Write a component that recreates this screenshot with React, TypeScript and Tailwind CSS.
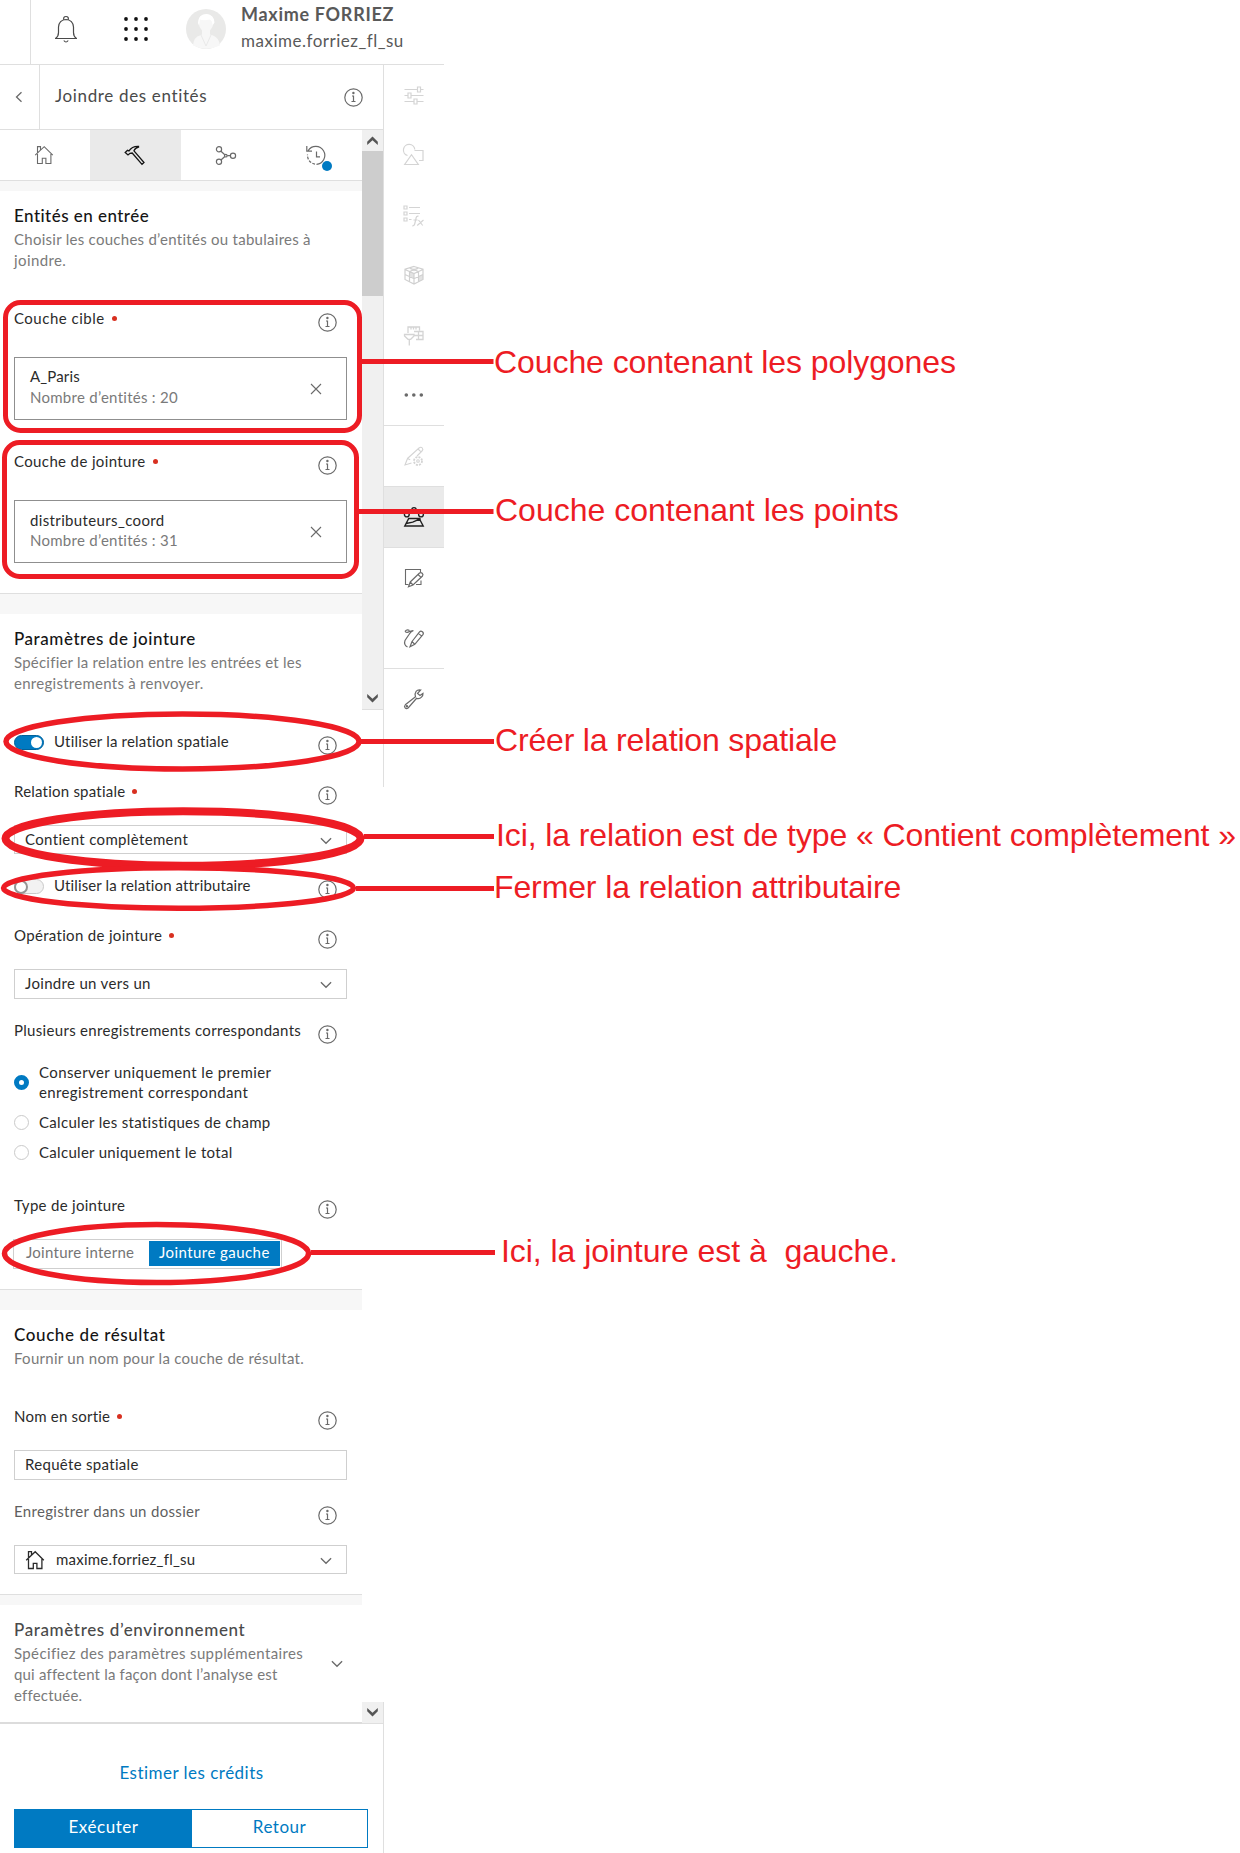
import React from "react";

type IconProps = { className?: string; children: React.ReactNode; size?: number; w?: number };

/* Stroke icon drawn on a 20 unit grid, one unit per pixel. */
function Icon({ className = "", children, size = 20, w = 1 }: IconProps) {
  return (
    <svg
      width={size}
      height={size}
      viewBox="0 0 20 20"
      fill="none"
      stroke="currentColor"
      strokeWidth={w}
      className={"block shrink-0 overflow-visible " + className}
    >
      {children}
    </svg>
  );
}

function Info({ className = "" }: { className?: string }) {
  return (
    <svg width="19" height="19" viewBox="0 0 19 19" fill="none" stroke="#6a6a6a" className={"block shrink-0 " + className}>
      <circle cx="9.5" cy="9.5" r="8.7" strokeWidth="1.2" />
      <path d="M8 8h1.5v5.5M7.500 13.500h4" strokeWidth="1.2" />
      <circle cx="9.4" cy="5" r="1.2" fill="#6a6a6a" stroke="none" />
    </svg>
  );
}

function Chevron({ className = "" }: { className?: string }) {
  return (
    <svg width="12" height="8" viewBox="0 0 12 8" fill="none" stroke="#6a6a6a" strokeWidth="1.3" className={"block shrink-0 " + className}>
      <path d="M0.9 1.2L6 6.3l5.1-5.1" />
    </svg>
  );
}

function HousePath() {
  return <path d="M3.5 9v9.5h4.8v-5.2h3.6v5.2h5V9M1.2 10.2L10.2 1.7l8.6 8.5M3.5 8.2V1.6h3v3.3" />;
}

type LabelRowProps = { text: string; tracking: string; required?: boolean; className?: string; color?: string };

function LabelRow({ text, tracking, required, className = "", color = "text-[#2b2b2b]" }: LabelRowProps) {
  return (
    <div className={"flex h-6 items-start justify-between pr-[25px] pl-[14px] " + className}>
      <div className="flex h-5 items-center">
        <span className={"text-[15px] leading-5 whitespace-nowrap " + tracking + " " + color}>{text}</span>
        {required && <span className="ml-[7px] size-[5px] rounded-full bg-[#d83020]" />}
      </div>
      <Info className="mt-[5px]" />
    </div>
  );
}

type LayerBoxProps = { name: string; nameTracking: string; count: string; pad: string };

function LayerBox({ name, nameTracking, count, pad }: LayerBoxProps) {
  return (
    <div className="mt-[25px] mr-[15px] ml-[14px] flex h-[63px] items-center justify-between border border-[#8f8f8f] pr-[24px] pl-[15px]">
      <div className={"flex h-full flex-col " + pad}>
        <span className={"text-[15px] leading-5 text-[#2b2b2b] " + nameTracking}>{name}</span>
        <span className="text-[15px] leading-5 tracking-[0.27px] text-[#7a7a7a]">{count}</span>
      </div>
      <svg width="12" height="12" viewBox="0 0 12 12" fill="none" stroke="#6a6a6a" strokeWidth="1.1">
        <path d="M1 1l10 10M11 1L1 11" />
      </svg>
    </div>
  );
}

type SelectBoxProps = { text: string; tracking: string; className: string; chevron?: boolean; home?: boolean };

function SelectBox({ text, tracking, className, chevron = true, home }: SelectBoxProps) {
  return (
    <div className={"mr-[15px] ml-[14px] flex items-center border border-[#cfcfcf] pr-[14px] pl-[10px] pb-[2px] " + className}>
      {home && (
        <Icon className="mt-[2px] mr-[11px] text-[#2b2b2b]" w={1.3} size={20}>
          <HousePath />
        </Icon>
      )}
      <span className={"grow text-[15px] leading-5 text-[#2b2b2b] " + tracking}>{text}</span>
      {chevron && <Chevron className="mt-[4px]" />}
    </div>
  );
}

function Title({ text, tracking, color = "text-[#151515]" }: { text: string; tracking: string; color?: string }) {
  return (
    <h2 className={"pl-[14px] text-[17px] leading-6 font-medium whitespace-nowrap " + tracking + " " + color}>{text}</h2>
  );
}

function Desc({ lines, className }: { lines: [string, string][]; className: string }) {
  return (
    <div className={"flex flex-col pl-[14px] text-[15px] leading-[21px] text-[#7a7a7a] " + className}>
      {lines.map(([text, tracking]) => (
        <span key={text} className={"whitespace-nowrap " + tracking}>
          {text}
        </span>
      ))}
    </div>
  );
}

function Radio({ checked, children, className }: { checked?: boolean; children: React.ReactNode; className: string }) {
  return (
    <div className={"flex items-center gap-[10px] pl-[14px] text-[15px] leading-5 text-[#2b2b2b] " + className}>
      {checked ? (
        <span className="mt-px size-[15px] shrink-0 rounded-full border-[5px] border-[#007ac2] bg-white" />
      ) : (
        <span className="mt-px size-[15px] shrink-0 rounded-full border border-[#cacaca] bg-white" />
      )}
      <div className="flex flex-col whitespace-nowrap">{children}</div>
    </div>
  );
}

function ToggleRow({ on, text, tracking, className }: { on?: boolean; text: string; tracking: string; className: string }) {
  return (
    <div className={"flex h-6 items-start pr-[25px] pl-[14px] " + className}>
      {on ? (
        <span className="mt-[4px] flex h-[15px] w-[30px] items-center justify-end rounded-full border border-[#00619b] bg-[#007ac2] px-px">
          <span className="size-[11px] rounded-full bg-white" />
        </span>
      ) : (
        <span className="mt-[4px] flex h-[15px] w-[30px] items-center rounded-full border border-[#cacaca] bg-[#f2f2f2]">
          <span className="-ml-px size-[14px] rounded-full border-2 border-[#959595] bg-white" />
        </span>
      )}
      <span className={"ml-[10px] grow text-[15px] leading-5 text-[#2b2b2b] " + tracking}>{text}</span>
      <Info className="mt-[5px]" />
    </div>
  );
}

function Arrow({ up, className = "" }: { up?: boolean; className?: string }) {
  return (
    <div className={"flex h-[21px] w-[21px] items-center justify-center bg-[#f0f0f0] " + className}>
      <svg width="11" height="9" viewBox="0 0 11 9" fill="#555">
        {up ? <path d="M5.500 0.500L0.200 5.700V9L5.500 4.300l5.300 4.700v-3.300z" /> : <path d="M5.500 8.500L0.200 3.300V0L5.500 4.700l5.300-4.700v3.300z" />}
      </svg>
    </div>
  );
}

function Tool({ children, className = "h-[60px]" }: { children: React.ReactNode; className?: string }) {
  return <div className={"flex shrink-0 items-center justify-center " + className}>{children}</div>;
}

function Toolbar() {
  return (
    <aside className="flex w-[60px] flex-col text-[#6a6a6a]">
      <Tool className="h-[60px] text-[#d4d4d4]">
        <Icon w={1.2}>
          <path d="M0.500 4.500h12.500M16.500 4.500H19.500M0.500 10.500h3M7 10.500h12.500M0.500 16.500h9M13 16.500h6.500M13.500 2h3v5h-3zM4 8h3v5H4zM10 14h3v5h-3z" />
        </Icon>
      </Tool>
      <Tool className="h-[60px] text-[#d4d4d4]">
        <Icon w={1.2}>
          <path d="M3.500 10.500A5.700 5.700 0 1 1 10.800 4.500M10.500 5.500h8.500v10H15M0.700 19.500h13.600L7.500 9.700z" />
        </Icon>
      </Tool>
      <Tool className="h-[60px] text-[#d4d4d4]">
        <Icon w={1.2}>
          <path d="M0 1h3v3H0zM5 2.500h11M0 7h3v3H0zM5 8.500h11M0 13h3v3H0zM5 14.500h2.500M8.200 21q2 0 2.500-2l1.500-6.500q.4-1.600 2.300-1.300M9.500 15h4M14.500 15l4.200 5.500M19.500 15l-6.300 5.500" />
        </Icon>
      </Tool>
      <Tool className="h-[60px] text-[#d0d0d0]">
        <Icon w={1.2}>
          <path d="M10 1.500l9 2.800v10.200l-9 4.500-9-4.500V4.300zM1 4.500l9 4 9-4M10 8.500V19M1 9.500l9 4.200 9-4.200M5.500 6.500v10.300M14.500 6.500v10.300M5.500 3l9 3.500M14.500 3l-9 3.500" />
          <path d="M5.500 6.500l4.500 2v5l-4.500-2zM14.500 11.500l4.500-2v5l-4.500 2.200zM10 3.300l4 1.500-4 1.500-4-1.500z" fill="currentColor" stroke="none" opacity=".6" />
        </Icon>
      </Tool>
      <Tool className="h-[60px] text-[#d4d4d4]">
        <Icon w={1.3}>
          <path d="M4 8V2h11.500v3.500M7 2v2.500M9.500 2v2.500M12 2v2.500M0.500 9.500h9.500v1.500l-3.300 3.300H4L0.500 11zM5.300 14.500V20.500M10 6.500h9v8h-7M14.500 6v8.500M10.500 10.500h8.500" />
        </Icon>
      </Tool>
      <Tool>
        <Icon className="fill-current stroke-none">
          <circle cx="2.300" cy="10" r="1.800" />
          <circle cx="9.800" cy="10" r="1.800" />
          <circle cx="17.300" cy="10" r="1.800" />
        </Icon>
      </Tool>
      <div className="border-y border-[#dfdfdf]">
        <Tool className="h-[60px] text-[#d4d4d4]">
          <Icon w={1.1}>
            <path d="M3.500 12.500L15 2q2-1.500 3.300 0t-.3 3L13 10M7.500 17l-6.500 2 2.500-6.500 2.700 1.200M14 3l2.800 2.600" />
            <circle cx="14" cy="15" r="4" strokeDasharray="2 1.140" strokeWidth="1.800" />
            <circle cx="14" cy="15" r="1.300" />
          </Icon>
        </Tool>
      </div>
      <Tool className="h-[61px] border-b border-[#dfdfdf] bg-[#eaeaea] text-[#202020]">
        <Icon w={1.400}>
          <path d="M4.700 11.500h10.500l4 7.500H0.800zM2.200 16.500l6.500-1.300 8-3.500" />
          <circle cx="10" cy="2.800" r="2.200" />
          <circle cx="2.800" cy="7.500" r="2.400" />
          <circle cx="17" cy="7.500" r="2.400" />
        </Icon>
      </Tool>
      <Tool>
        <Icon w={1.1}>
          <path d="M16.500 4V1.500h-15v15h3M12 16.500h5V12.500" />
          <path d="M6.200 14L15.500 5q1.300-1 2.700.2t.3 2.800L9 17l-4.500 1.800zM14 6.500l2.800 2.600M6.200 14L9 17" strokeWidth="1.200" />
        </Icon>
      </Tool>
      <Tool className="h-[61px] border-b border-[#dfdfdf]">
        <Icon w={1.200}>
          <path d="M8 13.500L15.500 3.800q1.300-1.300 2.900-.1t.5 2.900L10.800 16.300 6 18.700zM14.300 5.400l3.200 2.500M8 13.500l2.800 2.800" />
          <path d="M3.500 19Q-.5 17 1 12.500L5 6.500Q6.500 3.500 9.500 2.500M1 3.300q2-2.200 4.500-.8M1 3.300q2 2 4.300.2L9 2.500" />
        </Icon>
      </Tool>
      <Tool>
        <Icon w={1.200}>
          <path d="M11.500 7.800L1.300 15.800q-1.500 1.500-.2 3t3 .2l8.500-9.700q3 .8 4.900-1.200 1.700-1.600 1.500-3.800L16 6.500l-2.500-2L16.700 1q-3-.6-4.600 1.300-1.600 2-.6 5.500z" />
          <circle cx="2.900" cy="17.200" r=".6" />
        </Icon>
      </Tool>
    </aside>
  );
}

/* Hand drawn call-outs laid over the panel. */
function Annotations() {
  const text = "absolute text-[32px] leading-[36px] whitespace-pre text-[#ed1c24] font-['Liberation_Sans',Arial,sans-serif] ";
  return (
    <div className="pointer-events-none absolute inset-0">
      <svg width="1240" height="1853" viewBox="0 0 1240 1853" fill="none" stroke="#ed1c24" strokeWidth="5" className="absolute inset-0">
        <rect x="5.500" y="302.500" width="354" height="128" rx="15" />
        <rect x="4.500" y="442.500" width="352" height="134" rx="15" />
        <ellipse cx="182.500" cy="741.500" rx="176.500" ry="27.500" strokeWidth="5.500" />
        <ellipse cx="183" cy="838.500" rx="177.500" ry="27.300" strokeWidth="8" />
        <ellipse cx="178.500" cy="888" rx="175" ry="20.200" strokeWidth="5.500" />
        <ellipse cx="156.500" cy="1253.500" rx="152" ry="29" strokeWidth="5.500" />
        <path d="M362 361.500H493.500M358 511.500H493.500M361 741.500H494M364 836.500H494M356 888.500H494M311 1252.500H495" />
      </svg>
      <span className={text + "top-[344px] left-[494px] tracking-[-0.08px]"}>Couche contenant les polygones</span>
      <span className={text + "top-[492px] left-[495px] tracking-[0px]"}>Couche contenant les points</span>
      <span className={text + "top-[722px] left-[495px] tracking-[-0.18px]"}>Créer la relation spatiale</span>
      <span className={text + "top-[817px] left-[496px] tracking-[-0.1px]"}>Ici, la relation est de type « Contient complètement »</span>
      <span className={text + "top-[869px] left-[494px] tracking-[-0.12px]"}>Fermer la relation attributaire</span>
      <span className={text + "top-[1233px] left-[501px] tracking-[-0.05px]"}>Ici, la jointure est à  gauche.</span>
    </div>
  );
}

function Header() {
  return (
    <header className="flex h-[65px] w-[444px] border-b border-[#dfdfdf]">
      <div className="w-[31px] shrink-0 border-r border-[#dfdfdf]" />
      <svg width="24" height="28" viewBox="0 0 24 28" fill="none" stroke="#4a4a4a" strokeWidth="1.200" className="mt-[15px] ml-[23px] shrink-0">
        <path d="M1 23.500h22M1.500 23.500q3-2 3-6V12Q5 5 12 4.500q7 .5 7.500 7.500v5.500q0 4 3 6M9.800 4.800Q9 1.500 12 1.500t2.200 3.300M9.800 25.500Q12 28.500 14.200 25.500" />
      </svg>
      <svg width="26" height="26" viewBox="0 0 26 26" fill="#111" className="mt-[16px] ml-[45px] shrink-0">
        {[3, 13, 23].map((y) => [3, 13, 23].map((x) => <circle key={x + "-" + y} cx={x} cy={y} r="1.900" />))}
      </svg>
      <svg width="40" height="40" viewBox="0 0 40 40" className="mt-[9px] ml-[37px] shrink-0">
        <circle cx="20" cy="20" r="20" fill="#e9e9e8" />
        <path d="M7 36.500q1-9 7-10l2-1v-4q-3-3-3.500-8Q12 5.500 20 5q8 .5 7.500 8.500-.5 5-3.500 8v4l3 1q6 2 7 10Q20 43 7 36.500z" fill="#f7f7f7" />
        <path d="M12 14q0-8.500 8.500-9 7.500.5 8 8.500l-2 3q0-5-3-6-6 1.500-9.500 0l-1 6z" fill="#fff" />
        <path d="M15 26l5 11 5-11" fill="none" stroke="#e4e4e4" strokeWidth=".8" />
      </svg>
      <div className="ml-[15px] flex flex-col whitespace-nowrap text-[#595959]">
        <span className="mt-[2px] text-[18px] leading-6 font-bold tracking-[0.7px]">Maxime FORRIEZ</span>
        <span className="mt-[3px] text-[17px] leading-6 tracking-[0.5px]">maxime.forriez_fl_su</span>
      </div>
    </header>
  );
}

function Tabs() {
  return (
    <nav className="flex h-[51px] w-[362px] border-b border-[#dfdfdf] text-[#6a6a6a]">
      <div className="flex w-[90px] items-center justify-center">
        <Icon className="-ml-[2px]" w={1.1}>
          <HousePath />
        </Icon>
      </div>
      <div className="flex w-[91px] items-center justify-center bg-[#eaeaea] text-[#151515]">
        <Icon className="-ml-[3px]" w={1.3}>
          <path d="M1.200 7.500l2.300-2.200 1.500.6Q8 1 14.500 1.300v.8Q11 2.800 10 5.800L20 17.500l-2 1.900L8.200 8 6 8.300 4 10z" />
        </Icon>
      </div>
      <div className="flex w-[90px] items-center justify-center">
        <Icon w={1.200}>
          <circle cx="3" cy="4.300" r="2.600" />
          <circle cx="3" cy="16.800" r="2.600" />
          <circle cx="17" cy="10.800" r="2.600" />
          <circle cx="9.800" cy="10.700" r="1.300" />
          <path d="M5 6.200l3.800 3.500M5 15l3.800-3.500M11.200 10.700h3" />
        </Icon>
      </div>
      <div className="flex w-[91px] items-center justify-center">
        <div className="relative -ml-[2px]">
          <Icon w={1.200}>
            <path d="M2.200 5.500A9 9 0 1 1 10.500 19.300M10.500 6.500v5.300h3.500M0.800 1v5.200H6" />
            <path d="M9 19.200A9 9 0 0 1 1.500 9.500" strokeDasharray="2.800 1.400" />
          </Icon>
          <span className="absolute top-[16px] left-[16px] size-[10px] rounded-full bg-[#007ac2]" />
        </div>
      </div>
    </nav>
  );
}

const BAND = "w-[362px] shrink-0 border-t border-[#dfdfdf] bg-[#f7f7f7] ";

export default function App() {
  return (
    <div className="relative h-[1853px] w-[1240px] overflow-hidden bg-white font-[Lato,sans-serif]">
      <Header />
      <div className="flex items-start">
        <div className="flex w-[384px] flex-col">
          <div className="flex h-[65px] items-center border-r border-b border-[#dfdfdf]">
            <div className="flex h-full w-[40px] shrink-0 items-center justify-center border-r border-[#dfdfdf]">
              <svg width="8" height="12" viewBox="0 0 8 12" fill="none" stroke="#6a6a6a" strokeWidth="1.300" className="-ml-[2px]">
                <path d="M6.500 1.200L1.500 6l5 4.800" />
              </svg>
            </div>
            <h1 className="mb-[2px] ml-[15px] grow text-[17px] leading-6 tracking-[0.65px] whitespace-nowrap text-[#4a4a4a]">Joindre des entités</h1>
            <Info className="mt-px mr-[20px]" />
          </div>
          <div className="flex h-[1594px]">
            <div className="flex w-[362px] shrink-0 flex-col border-b-2 border-[#dcdcdc]">
              <Tabs />
              <div className="h-[10px] bg-[#f7f7f7]" />
              <section className="flex flex-col pt-[13px] pb-[30px]">
                <Title text="Entités en entrée" tracking="tracking-[0.46px]" />
                <Desc
                  className="mt-px"
                  lines={[
                    ["Choisir les couches d’entités ou tabulaires à", "tracking-[0.27px]"],
                    ["joindre.", "tracking-[0.4px]"],
                  ]}
                />
                <LabelRow className="mt-[37px]" text="Couche cible" tracking="tracking-[0.5px]" required />
                <LayerBox name="A_Paris" nameTracking="tracking-[0.15px]" count="Nombre d’entités : 20" pad="pt-[8px] gap-px" />
                <LabelRow className="mt-[31px]" text="Couche de jointure" tracking="tracking-[0.37px]" required />
                <LayerBox name="distributeurs_coord" nameTracking="tracking-[0.36px]" count="Nombre d’entités : 31" pad="pt-[9px]" />
              </section>
              <div className={BAND + "h-[21px]"} />
              <section className="flex flex-col pt-[13px] pb-[20px]">
                <Title text="Paramètres de jointure" tracking="tracking-[0.55px]" />
                <Desc
                  className="mt-px mb-px"
                  lines={[
                    ["Spécifier la relation entre les entrées et les", "tracking-[0.22px]"],
                    ["enregistrements à renvoyer.", "tracking-[0.27px]"],
                  ]}
                />
                <ToggleRow on className="mt-[36px]" text="Utiliser la relation spatiale" tracking="tracking-[0.2px]" />
                <LabelRow className="mt-[26px]" text="Relation spatiale" tracking="tracking-[0.22px]" required />
                <SelectBox className="mt-[20px] h-[29px]" text="Contient complètement" tracking="tracking-[0.35px]" />
                <ToggleRow className="mt-[21px]" text="Utiliser la relation attributaire" tracking="tracking-[0.13px]" />
                <LabelRow className="mt-[26px]" text="Opération de jointure" tracking="tracking-[0.32px]" required />
                <SelectBox className="mt-[20px] h-[30px]" text="Joindre un vers un" tracking="tracking-[0.32px]" />
                <LabelRow className="mt-[21px] mb-px" text="Plusieurs enregistrements correspondants" tracking="tracking-[0.31px]" />
                <Radio checked className="mt-[17px]">
                  <span className="tracking-[0.4px]">Conserver uniquement le premier</span>
                  <span className="tracking-[0.37px]">enregistrement correspondant</span>
                </Radio>
                <Radio className="mt-[10px]">
                  <span className="tracking-[0.3px]">Calculer les statistiques de champ</span>
                </Radio>
                <Radio className="mt-[10px]">
                  <span className="tracking-[0.3px]">Calculer uniquement le total</span>
                </Radio>
                <LabelRow className="mt-[33px] mb-px" text="Type de jointure" tracking="tracking-[0.3px]" />
                <div className="mt-[19px] ml-[13px] flex h-[30px] w-[269px] border border-[#cfcfcf] p-px text-[15px] leading-[22px] whitespace-nowrap">
                  <div className="w-[134px] pl-[11px] tracking-[0.27px] text-[#757575]">Jointure interne</div>
                  <div className="h-[25px] w-[131px] bg-[#007ac2] pl-[10px] tracking-[0.44px] text-white">Jointure gauche</div>
                </div>
              </section>
              <div className={BAND + "h-[21px]"} />
              <section className="flex flex-col pt-[13px] pb-[20px]">
                <Title text="Couche de résultat" tracking="tracking-[0.6px]" />
                <Desc className="mt-px" lines={[["Fournir un nom pour la couche de résultat.", "tracking-[0.28px]"]]} />
                <LabelRow className="mt-[37px]" text="Nom en sortie" tracking="tracking-[0.22px]" required />
                <SelectBox className="mt-[20px] h-[30px]" text="Requête spatiale" tracking="tracking-[0.31px]" chevron={false} />
                <LabelRow className="mt-[21px]" text="Enregistrer dans un dossier" tracking="tracking-[0.33px]" color="text-[#5f5f5f]" />
                <SelectBox className="mt-[20px] h-[29px]" text="maxime.forriez_fl_su" tracking="tracking-[0.23px]" home />
              </section>
              <div className={BAND + "h-[11px]"} />
              <section className="flex grow items-start justify-between pt-[13px] pr-[19px]">
                <div className="flex flex-col">
                  <Title text="Paramètres d’environnement" tracking="tracking-[0.63px]" color="text-[#4a4a4a]" />
                  <Desc
                    className="mt-px"
                    lines={[
                      ["Spécifiez des paramètres supplémentaires", "tracking-[0.37px]"],
                      ["qui affectent la façon dont l’analyse est", "tracking-[0.18px]"],
                      ["effectuée.", "tracking-[0.2px]"],
                    ]}
                  />
                </div>
                <Chevron className="mt-[42px]" />
              </section>
            </div>
            <div className="flex w-[22px] flex-col">
              <div className="h-[657px] border-r border-[#dfdfdf]">
                <div className="h-[580px] border-b border-[#dfdfdf] bg-[#f0f0f0]">
                  <Arrow up />
                  <div className="h-[145px] bg-[#cdcdcd]" />
                  <Arrow className="mt-[392px]" />
                </div>
              </div>
              <div className="mt-auto border-r border-b border-[#dfdfdf]">
                <Arrow />
              </div>
            </div>
          </div>
          <footer className="flex h-[129px] flex-col border-r border-[#dfdfdf] text-[17px] leading-6">
            <a className="mt-[37px] self-center tracking-[0.48px] text-[#007ac2]">Estimer les crédits</a>
            <div className="mt-[24px] ml-[14px] flex h-[39px] w-[354px] border border-[#007ac2] text-center leading-[34px]">
              <button className="w-[177px] bg-[#007ac2] pb-[3px] tracking-[0.55px] text-white">Exécuter</button>
              <button className="grow pb-[3px] tracking-[0.5px] text-[#007ac2]">Retour</button>
            </div>
          </footer>
        </div>
        <Toolbar />
      </div>
      <Annotations />
    </div>
  );
}
